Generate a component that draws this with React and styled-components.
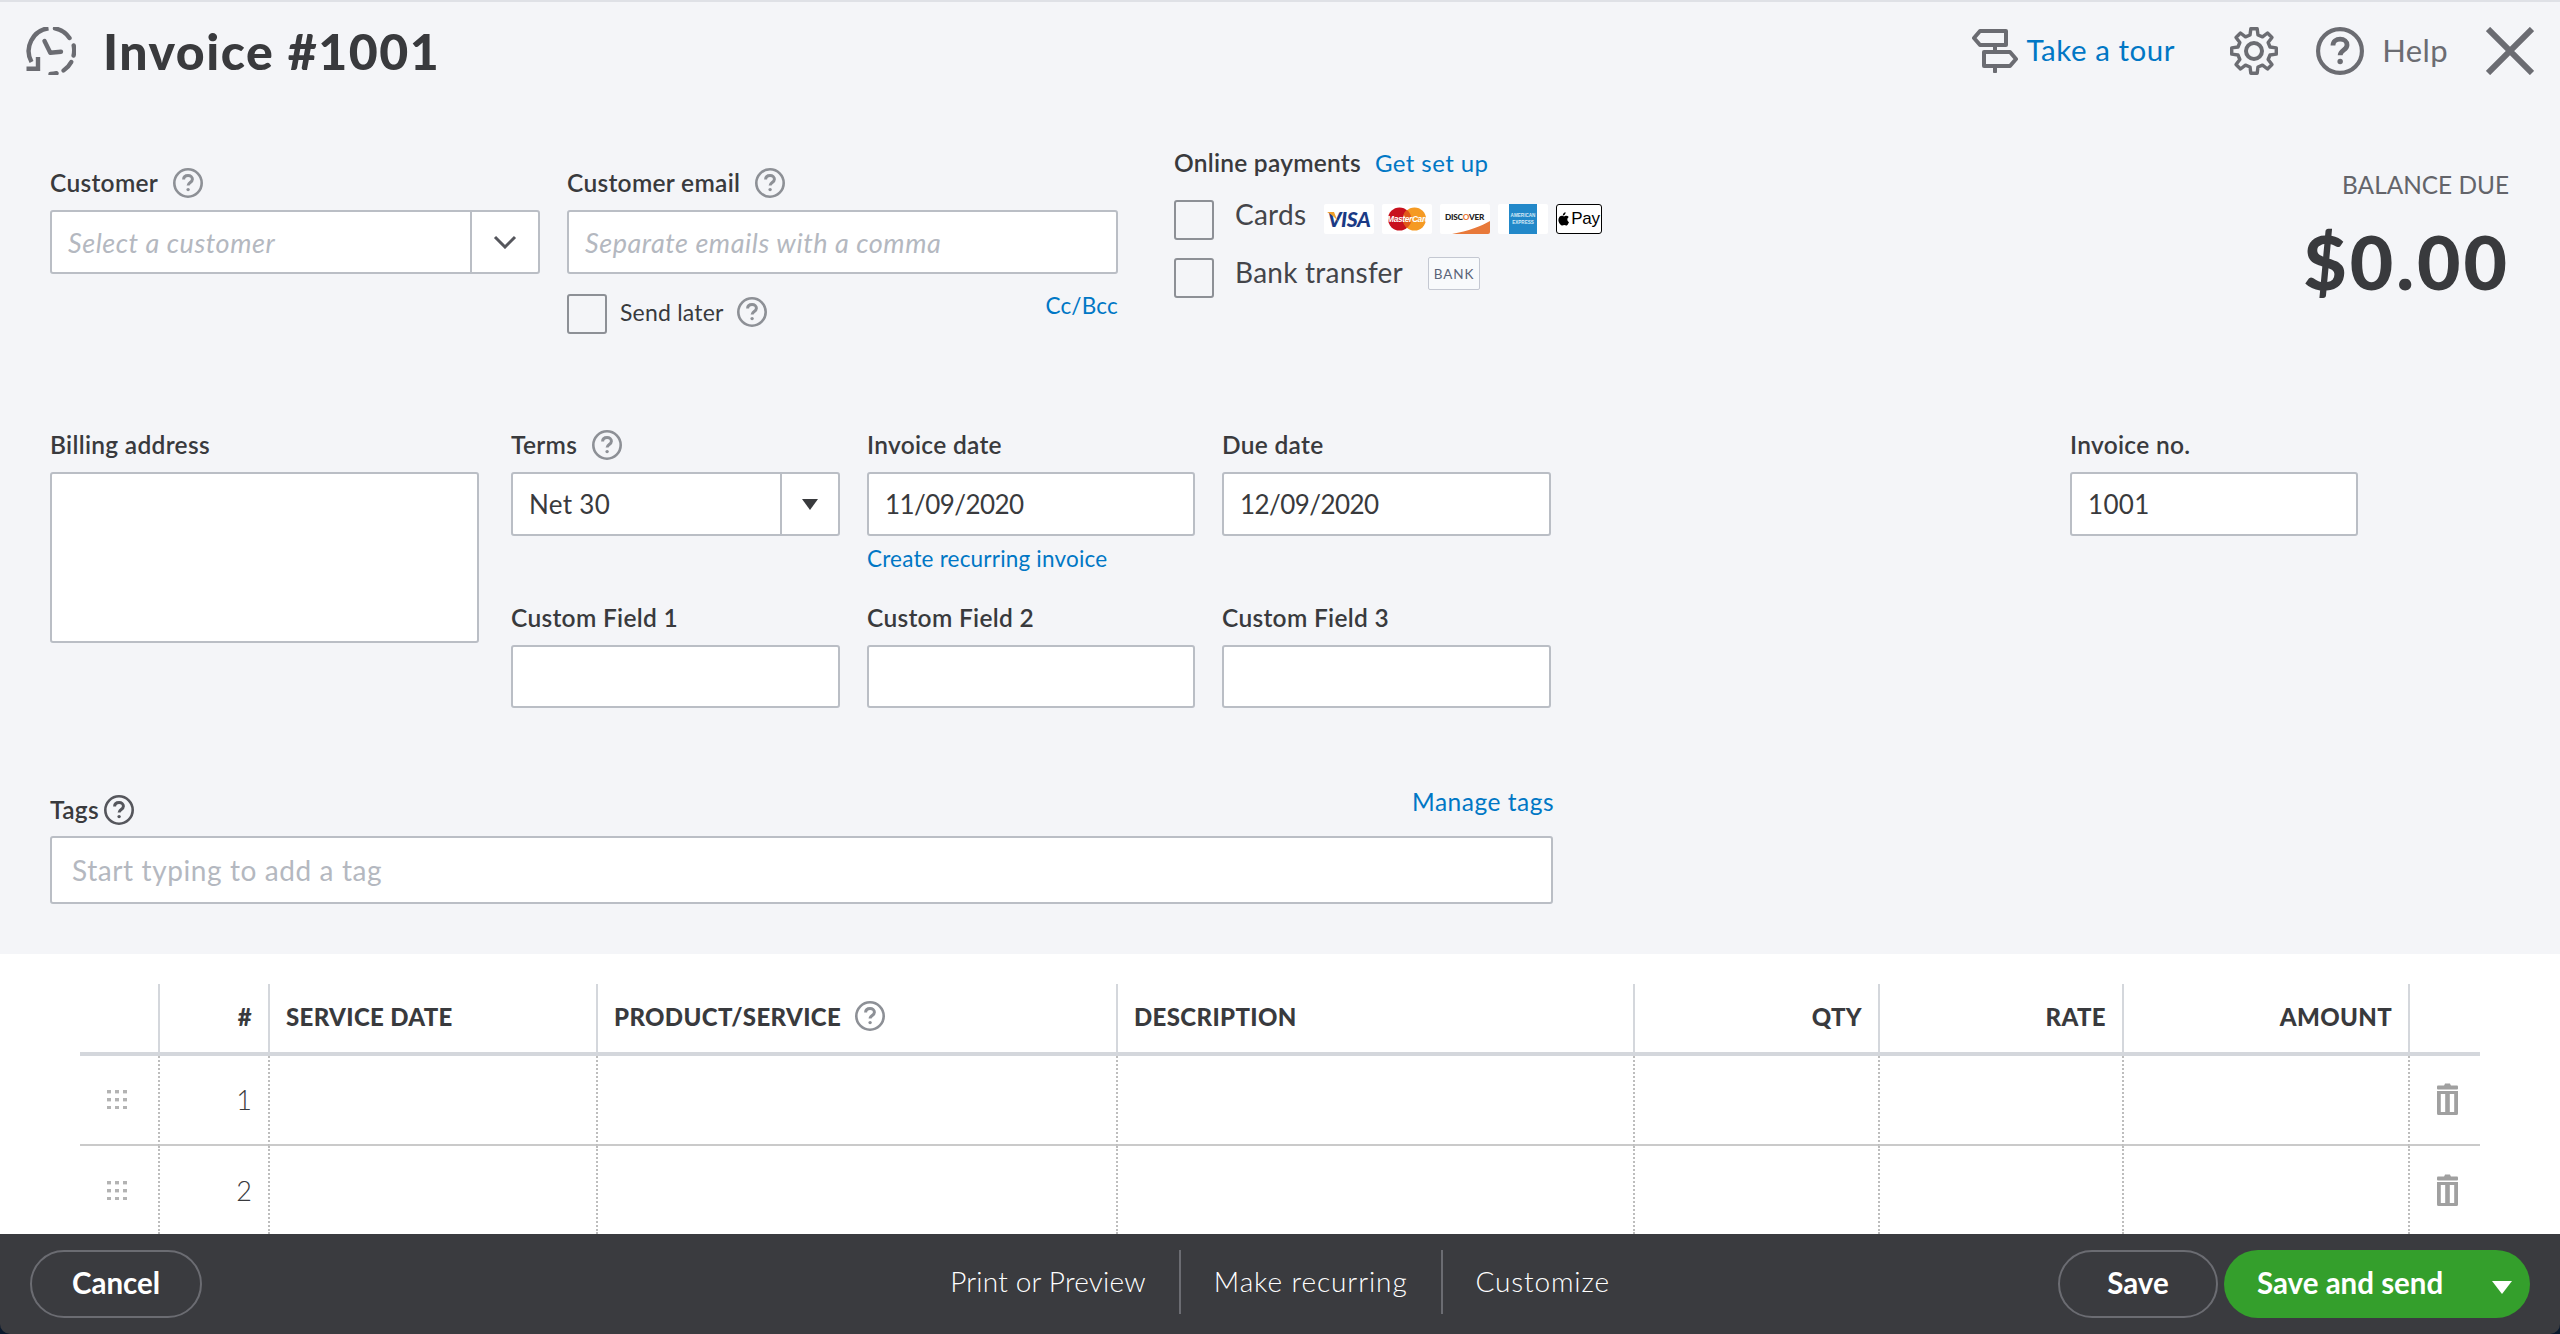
import React from "react";
import styled, { createGlobalStyle } from "styled-components";

const Global = createGlobalStyle`
  * { box-sizing: border-box; }
  html, body { margin: 0; padding: 0; background: #0b1a2e; }
  body { font-family: Lato, "Open Sans", "Liberation Sans", sans-serif; color: #393a3d; }
`;

const Page = styled.div`
  width: 2560px; height: 1334px; display: flex; flex-direction: column; overflow: hidden;
  background: #0b1a2e; border-top: 2px solid #dfe1e6;
`;
const Main = styled.div`display: flex; flex-direction: column; height: 952px; background: #f4f5f8;`;
const Header = styled.header`
  height: 98px; flex: none; display: flex; align-items: center; padding: 0 26px 0 26px;
`;
const Title = styled.h1`
  margin: 0 0 0 27px; font-size: 50px; font-weight: 900; letter-spacing: 1.5px; line-height: 60px; color: #393a3d;
`;
const HeaderTools = styled.div`margin-left: auto; display: flex; align-items: center;`;
const TourLink = styled.a`font-size: 29.5px; font-weight: 400; color: #0077c5; margin: 0 55px 3px 8px; letter-spacing: .55px;`;
const ToolGap = styled.span`display: block; width: 38px;`;
const HelpText = styled.span`font-size: 31px; font-weight: 400; color: #6b6c72; margin: 0 38px 3px 18px; letter-spacing: .4px;`;
const SvgIcon = styled.svg`display: block; flex: none;`;

const Form = styled.div`flex: 1; display: flex; flex-direction: column; padding: 50px 51px 0 50px;`;
const TopRow = styled.div`height: 281px; display: flex; align-items: flex-start;`;
const Column = styled.div`width: ${p => p.$w}px; margin-left: ${p => p.$ml || 0}px; padding-top: ${p => p.$pt || 0}px; flex: none;`;
const LabelRow = styled.div`height: 30px; display: flex; align-items: center; gap: ${p => p.$gap ?? 15}px; margin: -1px 0 12px;`;
const Label = styled.label`font-size: 24.5px; font-weight: 600; color: #393a3d; line-height: 30px; white-space: nowrap; letter-spacing: .3px;`;
const Box = styled.div`
  height: ${p => p.$h || 64}px; background: #fff; border: 2px solid #babec5; border-radius: 3px;
  display: flex; align-items: center; padding: 0 ${p => p.$pad || 16}px 0 ${p => p.$pad || 16}px; font-size: 26px; font-weight: 400; line-height: 30px; color: #393a3d;
  letter-spacing: .3px; overflow: hidden;
`;
const DateValue = styled.span`letter-spacing: -.55px;`;
const SelectBox = styled(Box)`padding: 0;`;
const SelectValue = styled.div`flex: 1; padding: 0 16px; white-space: nowrap;`;
const SelectButton = styled.div`
  width: ${p => p.$w}px; height: 100%; border-left: 2px solid #babec5; display: flex; align-items: center; justify-content: center; flex: none;
`;
const Placeholder = styled.span`
  display: block; margin-top: 2px; color: #b4b8c0; font-style: italic; font-weight: 400; font-size: 27px; letter-spacing: .55px; white-space: nowrap;
`;
const TagPlaceholder = styled.span`color: #b4b8c0; font-weight: 400; font-size: 28px; letter-spacing: .6px; white-space: nowrap;`;
const SendRow = styled.div`display: flex; justify-content: space-between; align-items: flex-start; margin-top: 20px;`;
const SendLeft = styled.div`display: flex; align-items: flex-start;`;
const SendInfo = styled.div`display: flex; align-items: center; height: 36px; margin-left: 13px; gap: 13px;`;
const Check = styled.span`display: block; flex: none; width: 40px; height: 40px; border: 2px solid #8d9096; border-radius: 3px; background: transparent;`;
const SendText = styled.span`font-size: 23px; font-weight: 400; color: #393a3d; letter-spacing: .2px;`;
const SmallLink = styled.a`font-size: 22.5px; font-weight: 400; line-height: 24px; color: #0077c5; letter-spacing: .2px; white-space: nowrap;`;

const PayTitle = styled.div`display: flex; align-items: center; gap: 14px; height: 25px; margin-bottom: 25px;`;
const PayTitleText = styled.span`font-size: 24.5px; font-weight: 600; letter-spacing: .25px;`;
const BlueText = styled.a`font-size: 24px; color: #0077c5; letter-spacing: .4px;`;
const PayRow = styled.div`display: flex; align-items: flex-start; height: 40px; margin-bottom: 18px;`;
const PayLabel = styled.span`
  font-size: 28px; font-weight: 400; line-height: 28px; margin-left: 21px; width: ${p => p.$w}px; color: #44454a; letter-spacing: .25px; white-space: nowrap;
`;
const Logos = styled.div`display: flex; gap: 8px; margin: 4px 0 0 15px;`;
const Logo = styled.div`
  width: ${p => p.$w || 50}px; height: 30px; background: ${p => p.$bg || "#fff"}; border-radius: 2px; position: relative;
  overflow: hidden; display: flex; align-items: center; justify-content: center;
`;
const VisaText = styled.span`font: italic 900 21px/30px Lato, sans-serif; color: #1a3a85; letter-spacing: -.4px;`;
const VisaSwoosh = styled.svg`position: absolute; left: 3px; top: 8px;`;
const McText = styled.span`
  position: absolute; left: 5px; width: 42px; top: 0; text-align: center; font: italic 700 8.4px/30px "Liberation Sans", sans-serif; color: #fff; letter-spacing: -.35px; white-space: nowrap;
`;
const DiscoverText = styled.span`
  position: absolute; left: 5px; top: 4px; font: 900 8.2px/18px Lato, sans-serif; color: #222; white-space: nowrap; letter-spacing: -.2px;
`;
const OrangeLetter = styled.span`color: #e8793a;`;
const AmexSquare = styled.div`
  width: 28px; height: 30px; background: #2288c9; display: flex; flex-direction: column; align-items: center; justify-content: center;
  font: 700 4.6px/7px "Liberation Sans", sans-serif; color: #d6eaf7; white-space: nowrap;
`;
const AppleBox = styled(Logo)`border: 1.5px solid #000; border-radius: 3px; gap: 2px;`;
const AppleText = styled.span`font: 400 17px/26px "Liberation Sans", sans-serif; color: #000; letter-spacing: -.3px;`;
const BankBadge = styled.div`
  width: 52px; height: 33px; margin: -1px 0 0 28px; border: 1.5px solid #c4c8d2; border-radius: 2px; background: #f8fafc;
  display: flex; align-items: center; justify-content: center; font-size: 13.5px; letter-spacing: .9px; color: #5a6478;
`;
const BalanceCol = styled.div`margin-left: auto; text-align: right; padding-top: 20px;`;
const BalanceLabel = styled.div`font-size: 24.4px; line-height: 30px; font-weight: 400; color: #63646a; letter-spacing: 0;`;
const BalanceAmount = styled.div`font-size: 75px; line-height: 80px; font-weight: 900; color: #393a3d; margin: 21px -1px 0 0; letter-spacing: 3px;`;

const MiddleRow = styled.div`height: 364px; display: flex; align-items: flex-start;`;
const FieldGrid = styled.div`
  margin-left: 32px; display: grid; grid-template-columns: 329px 328px 329px; column-gap: 27px; grid-template-rows: 173px auto;
`;
const UnderLink = styled(SmallLink)`display: block; margin-top: 11px;`;
const InvoiceNo = styled.div`width: 288px; margin: 0 151px 0 auto;`;

const TagsBlock = styled.div`width: 1503px;`;
const TagsLabelRow = styled.div`display: flex; justify-content: space-between; align-items: flex-start; height: 30px; margin-bottom: 11px;`;
const TagsLeft = styled.div`display: flex; align-items: center; gap: 5px; height: 30px;`;
const ManageLink = styled(SmallLink)`font-size: 24.5px; line-height: 14px; margin-right: -1px; letter-spacing: .5px;`;

const TableSection = styled.section`height: 280px; background: #fff; padding: 30px 80px 0 80px; overflow: hidden;`;
const Grid = styled.div`
  display: grid; width: 2400px;
  grid-template-columns: 78px 110px 328px 520px 517px 245px 244px 286px 72px;
  grid-template-rows: 72px 90px 88px;
`;
const HeadCell = styled.div`
  display: flex; align-items: center; justify-content: ${p => p.$right ? "flex-end" : "flex-start"}; gap: 14px;
  height: 72px; padding: 0 16px 4px 16px; border-bottom: 4px solid #d4d7dc;
  border-left: ${p => p.$first ? "none" : "2px solid #d4d7dc"};
  font-size: 24px; font-weight: 900; color: #393a3d; white-space: nowrap; letter-spacing: .35px;
`;
const BodyCell = styled.div`
  display: flex; align-items: center; justify-content: flex-end;
  padding: 0 16px ${p => p.$line ? 2 : 0}px 0;
  border-bottom: ${p => p.$line ? "2px solid #cacaca" : "none"};
  border-left: ${p => p.$first ? "none" : "2px dotted #bdbdbd"};
  font-size: 27px; font-weight: 300; color: #393a3d;
`;
const IconCell = styled(BodyCell)`
  justify-content: center; padding-left: ${p => p.$pl || 0}px; padding-right: ${p => p.$pr || 0}px;
`;

const Footer = styled.footer`
  height: 100px; flex: none; display: grid; grid-template-columns: 1fr auto 1fr; align-items: center; padding: 0 30px;
  background: #3a3b3f; border-radius: 0 0 10px 10px;
`;
const PillButton = styled.button`
  width: ${p => p.$w}px; height: 68px; border-radius: 34px; border: 2px solid #6b6c72; background: transparent;
  color: #fff; font: 700 29.5px/30px Lato, sans-serif; padding: 0 0 2px; cursor: pointer;
`;
const FooterMiddle = styled.div`display: flex; align-items: center; margin-bottom: 4px;`;
const FooterLink = styled.div`
  height: 64px; display: flex; align-items: center; padding: 0 33px 3px; color: #fff; font-size: 28px; font-weight: 300; letter-spacing: ${p => p.$ls}px;
  border-left: ${p => p.$first ? "none" : "2px solid #6b6c72"}; white-space: nowrap;
`;
const FooterRight = styled.div`display: flex; justify-content: flex-end; gap: 6px;`;
const GreenButton = styled.button`
  width: 306px; height: 68px; border-radius: 34px; border: none; background: #349f2c; color: #fff;
  display: flex; align-items: center; justify-content: space-between; padding: 0 18px 2px 33px; font: 700 29.5px/30px Lato, sans-serif; cursor: pointer;
`;
const ButtonCaret = styled.span`display: block; margin-top: 8px;`;

const gray = "#6b6c72";

const Help = ({ size = 30, color = "#8d9096", sw = 2.6 }) => (
  <SvgIcon width={size} height={size} viewBox="0 0 30 30" fill="none">
    <circle cx="15" cy="15" r={15 - sw / 2} stroke={color} strokeWidth={sw} />
    <path d="M10.6 11.6c0-2.6 2-4 4.5-4s4.3 1.5 4.3 3.6c0 3.2-4.3 3.3-4.3 6.4" stroke={color} strokeWidth={sw + .4} />
    <circle cx="15.1" cy="21.6" r="1.7" fill={color} />
  </SvgIcon>
);

const ClockIcon = () => (
  <SvgIcon width="50" height="48" viewBox="10 9 50 48" fill="none" stroke={gray} strokeWidth="4.4">
    <path d="M15.5 44A23 23 0 0 1 32.5 10.2" />
    <path d="M39 10.4A23 23 0 0 1 53.5 20" strokeLinecap="round" />
    <path d="M57.7 27.5A23 23 0 0 1 57.6 37.5" strokeLinecap="round" />
    <path d="M55.3 44A23 23 0 0 1 47.5 52.5" strokeLinecap="round" />
    <path d="M40.5 55.2A23 23 0 0 1 34.5 56" strokeLinecap="round" />
    <path d="M28.5 23L34.3 34.8L45 33.8" strokeLinecap="round" strokeLinejoin="round" />
    <path d="M10.5 50.8H22V39" />
  </SvgIcon>
);

const SignIcon = () => (
  <SvgIcon width="46" height="44" viewBox="12 14 46 44" fill="none" stroke={gray} strokeWidth="4" strokeLinejoin="round" strokeLinecap="round">
    <path d="M14 23L20 16H46V30H20Z" />
    <path d="M24 37H50L56 44L50 51H24Z" />
    <path d="M35 30V37M35 51V56.5" />
  </SvgIcon>
);

const gearPath = (() => {
  const pts = [], cx = 24, cy = 24, ro = 22.5, ri = 16.5, n = 8;
  for (let i = 0; i < n; i++) {
    const a = (i * Math.PI * 2) / n - Math.PI / 2;
    const step = Math.PI / n;
    [[ri, -step * .62], [ro, -step * .36], [ro, step * .36], [ri, step * .62]].forEach(([r, d]) => {
      pts.push(`${(cx + r * Math.cos(a + d)).toFixed(2)} ${(cy + r * Math.sin(a + d)).toFixed(2)}`);
    });
  }
  return "M" + pts.join("L") + "Z";
})();

const GearIcon = () => (
  <SvgIcon width="48" height="48" viewBox="0 0 48 48" fill="none" stroke={gray} strokeWidth="3.4" strokeLinejoin="round">
    <path d={gearPath} />
    <circle cx="24" cy="24" r="8" strokeWidth="4" />
  </SvgIcon>
);

const CloseIcon = () => (
  <SvgIcon width="48" height="48" viewBox="0 0 48 48" stroke={gray} strokeWidth="6" fill="none">
    <path d="M2 2L46 46M46 2L2 46" />
  </SvgIcon>
);

const Chevron = () => (
  <SvgIcon width="24" height="14" viewBox="0 0 24 14" fill="none" stroke="#55565c" strokeWidth="3"><path d="M2 2L12 12L22 2" /></SvgIcon>
);
const Caret = ({ w = 16, h = 11, color = "#393a3d" }) => (
  <SvgIcon width={w} height={h} viewBox="0 0 16 11" fill={color} preserveAspectRatio="none"><path d="M0 0H16L8 11Z" /></SvgIcon>
);

const DragDots = () => (
  <SvgIcon width="20" height="19" viewBox="0 0 20 19" fill="#b3b3b3">
    {[0, 8, 16].map(y => [0, 8, 16].map(x => <rect key={`${x}-${y}`} x={x} y={y} width="4" height="3.4" />))}
  </SvgIcon>
);

const Trash = () => (
  <SvgIcon width="21" height="32" viewBox="0 0 21 32" fill="#a0a0a0">
    <path d="M8 0.5h5l1 2.500H7z" />
    <rect x="0" y="2.500" width="21" height="4" rx="1" />
    <path fillRule="evenodd" d="M0 8h21v22.500a1.500 1.500 0 0 1-1.500 1.500h-18A1.500 1.500 0 0 1 0 30.500zM3.800 11v18h4.400V11zM12.800 11v18h4.400V11z" />
  </SvgIcon>
);

const VisaLogo = () => (
  <Logo>
    <VisaText>VISA</VisaText>
    <VisaSwoosh width="11" height="11" viewBox="0 0 11 11"><path d="M0 0H7L11 10C8 5 4 2 0 0Z" fill="#f0a02c" /></VisaSwoosh>
  </Logo>
);

const McLogo = () => (
  <Logo>
    <SvgIcon width="44" height="30" viewBox="0 0 44 30">
      <circle cx="14.500" cy="15" r="11.500" fill="#c8101e" />
      <circle cx="29.500" cy="15" r="11.500" fill="#f59a23" />
      <path d="M22 6a11.500 11.500 0 0 1 0 18a11.500 11.500 0 0 1 0-18z" fill="#e0561a" />
    </SvgIcon>
    <McText>MasterCard</McText>
  </Logo>
);

const DiscoverLogo = () => (
  <Logo>
    <DiscoverText>DISC<OrangeLetter>O</OrangeLetter>VER</DiscoverText>
    <SvgIcon width="50" height="30" viewBox="0 0 50 30"><path d="M12 30C28 27 42 22 50 17V30Z" fill="#e8793a" /></SvgIcon>
  </Logo>
);

const ApplePay = () => (
  <AppleBox $w={46}>
    <SvgIcon width="11" height="14" viewBox="0 0 13 16" fill="#000">
      <path d="M9 0c.1 1-.3 2-.9 2.700-.6.700-1.500 1.200-2.400 1.100C5.600 2.900 6 1.900 6.600 1.300 7.200.600 8.200.100 9 0zM12.700 5.500c-.1.100-1.700 1-1.700 3 0 2.300 2 3.100 2 3.100s-1.400 4.200-3.200 4.200c-.9 0-1.500-.6-2.400-.6-.9 0-1.700.6-2.300.6C3.300 15.800.5 12.800.5 9.300.5 6 2.600 4.200 4.600 4.200c.9 0 1.900.7 2.500.7.600 0 1.700-.7 2.800-.7 1 0 2 .4 2.800 1.300z" />
    </SvgIcon>
    <AppleText>Pay</AppleText>
  </AppleBox>
);

const cols = [
  { key: "drag" },
  { key: "#", label: "#", right: true },
  { key: "date", label: "SERVICE DATE" },
  { key: "prod", label: "PRODUCT/SERVICE", help: true },
  { key: "desc", label: "DESCRIPTION" },
  { key: "qty", label: "QTY", right: true },
  { key: "rate", label: "RATE", right: true },
  { key: "amt", label: "AMOUNT", right: true },
  { key: "del" },
];

const Row = ({ n, line }) => cols.map((c, i) => {
  if (c.key === "drag") return <IconCell key={c.key} $first $line={line} $pr={5}><DragDots /></IconCell>;
  if (c.key === "del") return <IconCell key={c.key} $line={line} $pl={4}><Trash /></IconCell>;
  return <BodyCell key={c.key} $line={line}>{c.key === "#" && n}</BodyCell>;
});

export default function App() {
  return (
    <>
      <Global />
      <Page>
        <Main>
          <Header>
            <ClockIcon />
            <Title>Invoice #1001</Title>
            <HeaderTools>
              <SignIcon />
              <TourLink>Take a tour</TourLink>
              <GearIcon />
              <ToolGap />
              <Help size={48} color={gray} sw={2.6} />
              <HelpText>Help</HelpText>
              <CloseIcon />
            </HeaderTools>
          </Header>
          <Form>
            <TopRow>
              <Column $w={490} $pt={19}>
                <LabelRow><Label>Customer</Label><Help /></LabelRow>
                <SelectBox>
                  <SelectValue><Placeholder>Select a customer</Placeholder></SelectValue>
                  <SelectButton $w={68}><Chevron /></SelectButton>
                </SelectBox>
              </Column>
              <Column $w={551} $ml={27} $pt={19}>
                <LabelRow><Label>Customer email</Label><Help /></LabelRow>
                <Box><Placeholder>Separate emails with a comma</Placeholder></Box>
                <SendRow>
                  <SendLeft>
                    <Check />
                    <SendInfo><SendText>Send later</SendText><Help /></SendInfo>
                  </SendLeft>
                  <SmallLink>Cc/Bcc</SmallLink>
                </SendRow>
              </Column>
              <Column $w={440} $ml={56}>
                <PayTitle><PayTitleText>Online payments</PayTitleText><BlueText>Get set up</BlueText></PayTitle>
                <PayRow>
                  <Check />
                  <PayLabel $w={74}>Cards</PayLabel>
                  <Logos>
                    <VisaLogo />
                    <McLogo />
                    <DiscoverLogo />
                    <Logo><AmexSquare><span>AMERICAN</span><span>EXPRESS</span></AmexSquare></Logo>
                    <ApplePay />
                  </Logos>
                </PayRow>
                <PayRow>
                  <Check />
                  <PayLabel $w={165}>Bank transfer</PayLabel>
                  <BankBadge>BANK</BankBadge>
                </PayRow>
              </Column>
              <BalanceCol>
                <BalanceLabel>BALANCE DUE</BalanceLabel>
                <BalanceAmount>$0.00</BalanceAmount>
              </BalanceCol>
            </TopRow>
            <MiddleRow>
              <Column $w={429}>
                <LabelRow><Label>Billing address</Label></LabelRow>
                <Box $h={171} />
              </Column>
              <FieldGrid>
                <div>
                  <LabelRow><Label>Terms</Label><Help /></LabelRow>
                  <SelectBox>
                    <SelectValue>Net 30</SelectValue>
                    <SelectButton $w={58}><Caret /></SelectButton>
                  </SelectBox>
                </div>
                <div>
                  <LabelRow><Label>Invoice date</Label></LabelRow>
                  <Box><DateValue>11/09/2020</DateValue></Box>
                  <UnderLink>Create recurring invoice</UnderLink>
                </div>
                <div>
                  <LabelRow><Label>Due date</Label></LabelRow>
                  <Box><DateValue>12/09/2020</DateValue></Box>
                </div>
                {[1, 2, 3].map(n => (
                  <div key={n}>
                    <LabelRow><Label>Custom Field {n}</Label></LabelRow>
                    <Box $h={63} />
                  </div>
                ))}
              </FieldGrid>
              <InvoiceNo>
                <LabelRow><Label>Invoice no.</Label></LabelRow>
                <Box>1001</Box>
              </InvoiceNo>
            </MiddleRow>
            <TagsBlock>
              <TagsLabelRow>
                <TagsLeft><Label>Tags</Label><Help color="#55565c" /></TagsLeft>
                <ManageLink>Manage tags</ManageLink>
              </TagsLabelRow>
              <Box $h={68} $pad={20}><TagPlaceholder>Start typing to add a tag</TagPlaceholder></Box>
            </TagsBlock>
          </Form>
        </Main>
        <TableSection>
          <Grid>
            {cols.map((c, i) => (
              <HeadCell key={c.key} $first={i === 0} $right={c.right}>
                {c.label}{c.help && <Help />}
              </HeadCell>
            ))}
            <Row n={1} line />
            <Row n={2} />
          </Grid>
        </TableSection>
        <Footer>
          <div><PillButton $w={172}>Cancel</PillButton></div>
          <FooterMiddle>
            <FooterLink $first $ls={.2}>Print or Preview</FooterLink>
            <FooterLink $ls={.9}>Make recurring</FooterLink>
            <FooterLink $ls={.85}>Customize</FooterLink>
          </FooterMiddle>
          <FooterRight>
            <PillButton $w={160}>Save</PillButton>
            <GreenButton>Save and send<ButtonCaret><Caret w={20} h={13} color="#fff" /></ButtonCaret></GreenButton>
          </FooterRight>
        </Footer>
      </Page>
    </>
  );
}
